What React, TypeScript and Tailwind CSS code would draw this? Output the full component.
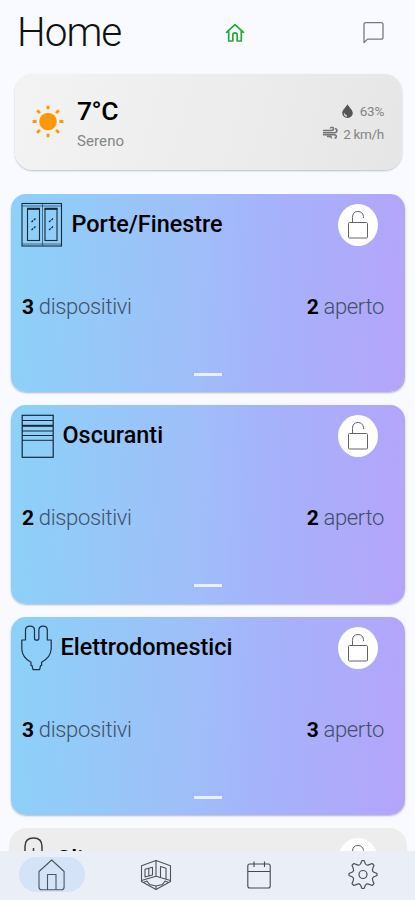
import React from "react";

const HomeSmall = () => (
  <svg className="h-5 w-5" viewBox="0 0 20 20" fill="none" stroke="#23a936" strokeWidth="1.7" strokeLinejoin="round" strokeLinecap="round">
    <path d="M1.500 9.300 10 1.600l8.500 7.700M3.700 8v10h4.100v-6.200q0-2 2.200-2t2.200 2V18h4.100V8" />
  </svg>
);

const Chat = () => (
  <svg className="h-6 w-6" viewBox="0 0 24 24" fill="none" stroke="#777a7e" strokeWidth="1.300" strokeLinejoin="round">
    <path d="M3 21.500V3.500q0-1.900 1.900-1.900h15.200q1.900 0 1.900 1.900v12.700q0 1.900-1.900 1.900H6.500z" />
  </svg>
);

const Sun = () => (
  <svg className="h-9 w-9 shrink-0" viewBox="0 0 36 36" fill="#ff9808">
    <circle cx="18" cy="17.500" r="8.800" />
    <path stroke="#ff9808" strokeWidth="2.800" d="M18 1.800v3.500M18 29.700v3.500M2.600 17.500h4M29.400 17.500h4M7.200 6.200l2.700 2.900M26.100 25.900l2.700 2.900M7.200 28.800l2.700-2.900M26.100 9.100l2.700-2.900" />
  </svg>
);

const Drop = () => (
  <svg className="h-4 w-[13px]" viewBox="0 0 14 16">
    <path d="M7 .7C5 4.300 1.300 7 1.300 10.200a5.700 5.300 0 0 0 11.400 0C12.700 7 9 4.300 7 .7Z" fill="#555" />
    <path d="M3.500 10.500q.3 2.700 3 3" fill="none" stroke="#ddd" strokeWidth="1.200" />
  </svg>
);

const Wind = () => (
  <svg className="h-[15px] w-[15px]" viewBox="0 0 15 15" fill="none" stroke="#747474" strokeWidth="1.600">
    <path d="M0 4.500h8.500q2 0 2-1.700T8.800 1.300q-1.300 0-1.500 1.200M0 6.800h11.500q2.400-.2 2.400-2.200T12 2.800M0 8.800h11q2.300.1 2.300 1.800T11.500 12M4 10.500h3.500q1 .2.800 1.800" />
  </svg>
);

const Windows = () => (
  <svg className="h-[45px] w-[42px]" viewBox="0 0 42 45" fill="none" stroke="#152a3b" strokeWidth="1.100">
    <rect x="1" y="1.500" width="39.500" height="42.500" />
    <path d="M21.500 1.500v42.500M1 4h39.500M1 42h39.500" strokeWidth=".6" />
    <rect x="6.500" y="7" width="12" height="31.500" />
    <rect x="24" y="7" width="12" height="31.500" />
    <path d="M6 6.800h13M23.500 6.800h13" strokeWidth="1.900" />
    <path d="m10.500 20 4-3.500M10.500 28l4-3.500M28 20l4-3.500M28 28l4-3.500" strokeWidth="1.300" strokeDasharray="2.200 1" />
  </svg>
);

const Shutter = () => (
  <svg className="h-[45px] w-[33px]" viewBox="0 0 33 45" fill="none" stroke="#14293a" strokeWidth="1.200">
    <rect x="1.200" y="1.300" width="31" height="42" />
    <path d="M1 6.500h31M1 17h31M1 21.500h31M1 26.300h31" strokeWidth="1" />
    <path d="M1 11.800h31" strokeWidth="2" />
  </svg>
);

const Plug = () => (
  <svg className="h-[46px] w-[31px]" viewBox="0 0 31 46" fill="none" stroke="#1b3042" strokeWidth="1.200" strokeLinejoin="round">
    <path d="M4.500 15V5.200q0-4 4.500-4t4.500 4V13.200q0 2 2.200 2t2.200-2V5.200q0-4 4.200-4t4.200 4V15h3.900v9q-.6 8.500-9.600 13.300v3.200h-1l-1 4.200h-6.600l-1-4.200h-1v-3.200Q1.200 32.500.8 24v-9Z" />
  </svg>
);

const Thermometer = () => (
  <svg className="h-[46px] w-[27px]" viewBox="0 0 27 46" fill="none" stroke="#3d3d3d" strokeWidth="1.500">
    <path d="M4 29V10.500q0-8.500 8.500-8.500T21 10.500V29a10 10 0 1 1-17 0ZM12.500 12v20" />
  </svg>
);

const OpenLock = () => (
  <div className="flex h-[42px] w-10 shrink-0 items-center justify-center rounded-[50%] bg-white">
    <svg className="h-8 w-6" viewBox="0 0 24 32" fill="none" stroke="#62666c" strokeWidth="1">
      <rect x="2.500" y="13.500" width="19" height="15.500" rx="1" />
      <path d="M6.500 13.500V8.500q0-6 5.500-6 4.700 0 5.500 5v1.500" />
    </svg>
  </div>
);

const NavHome = () => (
  <svg className="h-8 w-7" viewBox="0 0 28 32" fill="none" stroke="#4d5660" strokeWidth="1.100" strokeLinejoin="round">
    <path d="M13.700 1 1 12.500V28q0 2.800 2.800 2.800h19.500q2.800 0 2.800-2.800V12.500ZM9.500 30.500V15.500H18v15" />
  </svg>
);

const Rooms = () => (
  <svg className="h-8 w-8" viewBox="0 0 32 32" fill="none" stroke="#4d5358" strokeWidth="1.100" strokeLinejoin="round">
    <path d="M16 1.500 1.500 6.800v15.700L16 30.500l14.500-8V6.800ZM16 1.500v15.800M1.500 21.500 16 17.300l14.500 4.200" />
    <path d="m5 10.300 7.500-2v7.700L5 18ZM8.800 9.300V17M20.500 18.500V7.500l5.500 1.800V20" />
    <path d="m3.500 23.500 3.500-1.500 2.500 3.500 6.500 1.500 6.500-1.500 2.500-3.500 3.500 1.500M16 27v3.500" />
  </svg>
);

const Calendar = () => (
  <svg className="h-[30px] w-6" viewBox="0 0 24 30" fill="none" stroke="#45494e" strokeWidth="1.100">
    <rect x=".8" y="4" width="22.400" height="24" rx="2" />
    <path d="M1 11.500h22M7 1.500V7M17.500 1.500V7" />
  </svg>
);

const Gear = () => (
  <svg className="h-[31px] w-[30px]" viewBox="0 0 30 30" fill="none" stroke="#4b4f55" strokeWidth="1.200" strokeLinejoin="round">
    <path d="M12.500 4.500 14 1h2l1.500 3.500q1.300 1.700 3.100.9L24.200 4 26 5.800l-1.400 3.600q-.8 1.800.9 3.100L29 14v2l-3.500 1.500q-1.700 1.300-.9 3.100l1.400 3.600-1.800 1.800-3.600-1.400q-1.800-.8-3.100.9L16 29h-2l-1.500-3.500q-1.300-1.700-3.100-.9L5.800 26 4 24.200l1.400-3.600q.8-1.800-.9-3.100L1 16v-2l3.500-1.500q1.700-1.300.9-3.100L4 5.800 5.800 4l3.600 1.400q1.800.8 3.100-.9Z" />
    <circle cx="15" cy="15" r="4" />
  </svg>
);

type CardProps = { icon: React.ReactNode; title: string; count: number; open: number };

function DeviceCard({ icon, title, count, open }: CardProps) {
  return (
    <section className="flex h-[198.500px] shrink-0 flex-col rounded-[15px] bg-[linear-gradient(93deg,#8dd0f8_3%,#9fbff9_45%,#a4b4fb_62%,#b4a5fa_98%)] pr-[27px] pl-[10px] shadow-[0_1px_2px_rgba(80,80,110,0.4)]">
      <div className="flex h-[62px] items-center">
        {icon}
        <h2 className="ml-[8.500px] text-[23.400px] font-medium">{title}</h2>
        <div className="ml-auto"><OpenLock /></div>
      </div>
      <div className="mt-[37px] -mr-[6px] flex h-7 items-center justify-between pl-px text-[22px] tracking-[-0.330px] text-[#3f5068]">
        <p className="font-light"><b className="text-[21px] font-bold text-black">{count}</b> dispositivi</p>
        <p className="font-light"><b className="text-[21px] font-bold text-black">{open}</b> aperto</p>
      </div>
      <div className="mt-[52px] ml-[173px] h-[3px] w-7 shrink-0 bg-[#e8f0ff]" />
    </section>
  );
}

export default function App() {
  return (
    <div className="flex h-[900px] w-[415px] flex-col overflow-hidden bg-[#f8faff] font-['Roboto',sans-serif] text-black">
      <header className="flex h-[74px] shrink-0 items-center pr-[30px] pb-[9px] pl-[17px]">
        <h1 className="w-[208px] text-[40.500px] leading-none font-light tracking-[-1px] whitespace-nowrap text-[#111]">Home</h1>
        <HomeSmall />
        <div className="ml-auto"><Chat /></div>
      </header>
      <section className="mr-[13px] ml-[15px] flex h-24 shrink-0 items-center rounded-[18px] bg-[linear-gradient(105deg,#f3f3f3,#ededed_50%,#e6e6e6)] pr-[18px] pb-px pl-[15px] shadow-[0_1px_2px_rgba(70,80,90,0.35)]">
        <Sun />
        <div className="ml-[11px] pt-[2px]">
          <p className="text-[26.500px] leading-8 font-medium tracking-[-0.500px]">7°C</p>
          <p className="mt-[4px] text-[15px] leading-5 tracking-[0.100px] text-[#858585]">Sereno</p>
        </div>
        <div className="ml-auto flex flex-col items-end gap-[3px] pt-px text-[13.500px] leading-5 tracking-[-0.300px] text-[#858585]">
          <p className="flex items-center gap-[6px]"><Drop />63%</p>
          <p className="flex items-center gap-[5px]"><Wind />2 km/h</p>
        </div>
      </section>
      <main className="mt-[23.500px] flex min-h-0 flex-1 flex-col gap-[13px] overflow-hidden pr-[10px] pl-[11px]">
        <DeviceCard icon={<Windows />} title="Porte/Finestre" count={3} open={2} />
        <DeviceCard icon={<Shutter />} title="Oscuranti" count={2} open={2} />
        <DeviceCard icon={<Plug />} title="Elettrodomestici" count={3} open={3} />
        <section className="-mx-[2px] flex h-[198px] shrink-0 items-start rounded-[18px] bg-[#ededed] pr-[29px] pl-[12px]">
          <div className="flex h-[62px] w-full items-center">
            <Thermometer />
            <h2 className="ml-[8px] text-[23.300px] font-medium">Clima</h2>
            <div className="ml-auto"><OpenLock /></div>
          </div>
        </section>
      </main>
      <nav className="flex h-[49px] shrink-0 items-center bg-[#e9eef7] pb-[2px]">
        <div className="flex w-1/4 justify-center"><div className="flex h-[35px] w-[66px] items-center justify-center rounded-full bg-[#d4e3f7]"><NavHome /></div></div>
        <div className="flex w-1/4 justify-center"><Rooms /></div>
        <div className="flex w-1/4 justify-center"><Calendar /></div>
        <div className="flex w-1/4 justify-center"><Gear /></div>
      </nav>
    </div>
  );
}
